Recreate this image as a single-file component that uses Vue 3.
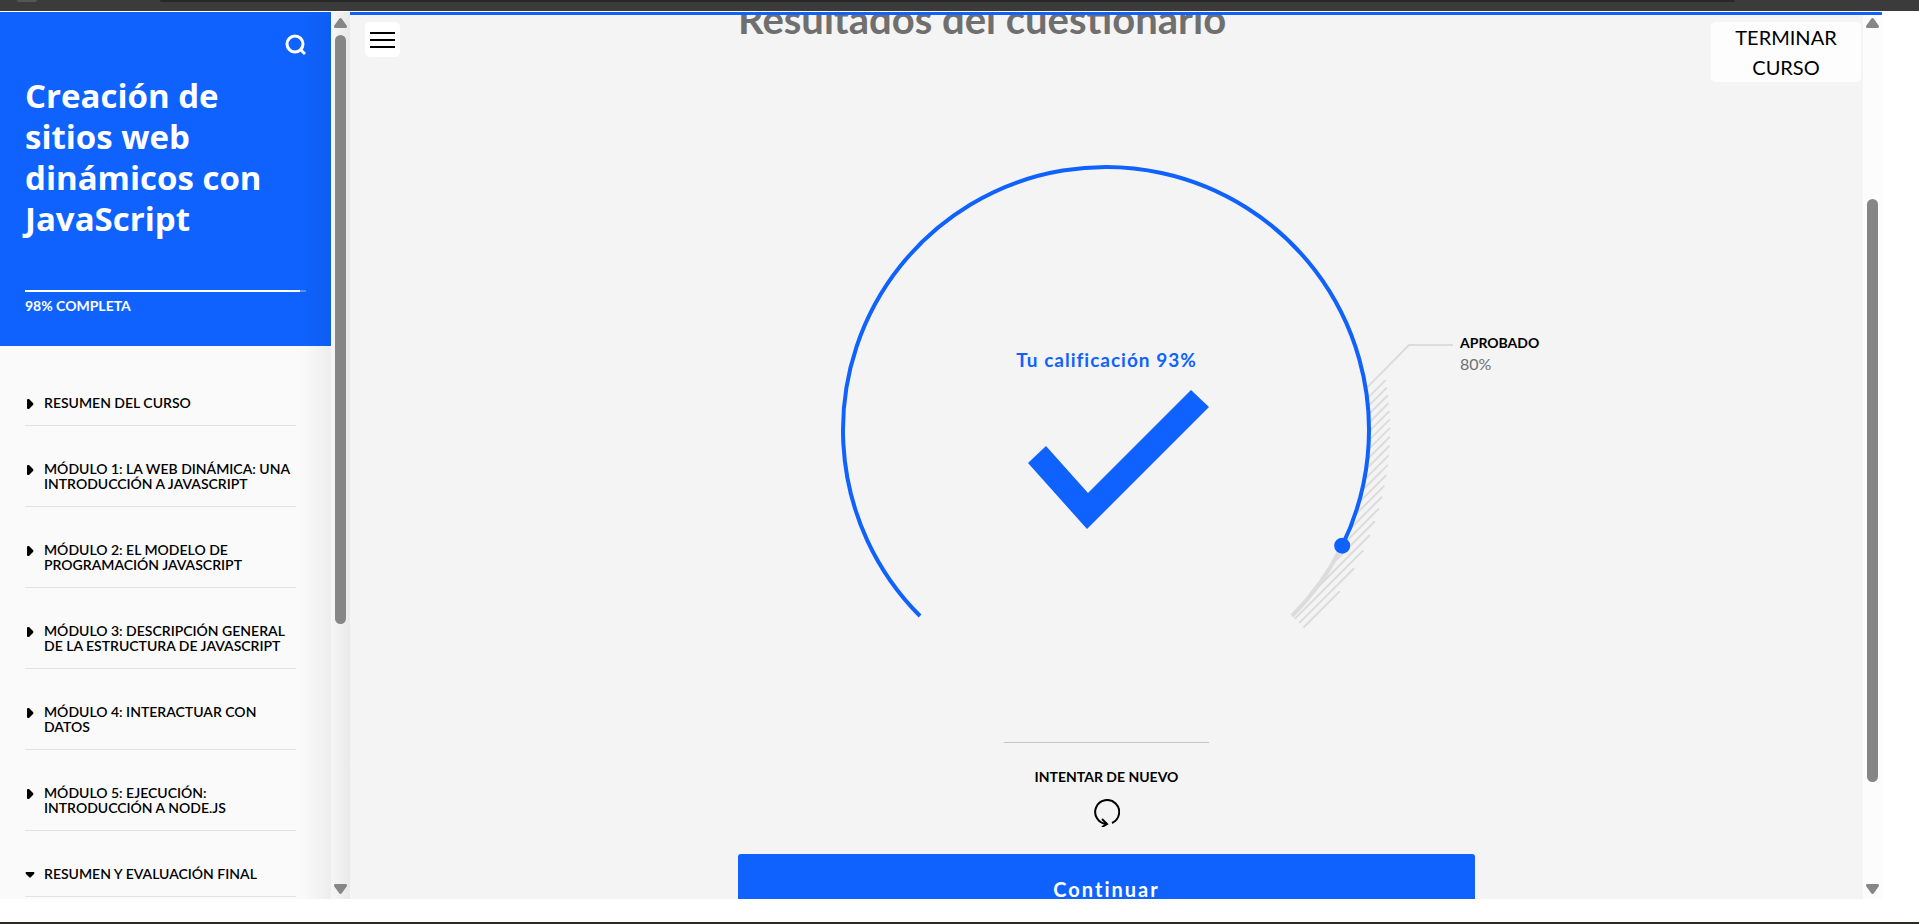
<script setup>
const modules = [
  { lines: ['RESUMEN DEL CURSO'], open: false },
  { lines: ['MÓDULO 1: LA WEB DINÁMICA: UNA', 'INTRODUCCIÓN A JAVASCRIPT'], open: false },
  { lines: ['MÓDULO 2: EL MODELO DE', 'PROGRAMACIÓN JAVASCRIPT'], open: false },
  { lines: ['MÓDULO 3: DESCRIPCIÓN GENERAL', 'DE LA ESTRUCTURA DE JAVASCRIPT'], open: false },
  { lines: ['MÓDULO 4: INTERACTUAR CON', 'DATOS'], open: false },
  { lines: ['MÓDULO 5: EJECUCIÓN:', 'INTRODUCCIÓN A NODE.JS'], open: false },
  { lines: ['RESUMEN Y EVALUACIÓN FINAL'], open: true },
]

const progress = 98

// Gauge: 270 degree arc
const cx = 368
const cy = 270
const radius = 263
const outer = 284
const point = (percent) => {
  const a = ((135 + 2.7 * percent) * Math.PI) / 180
  return { x: cx + radius * Math.cos(a), y: cy + radius * Math.sin(a) }
}
const start = point(0)
const end = point(100)
const score = point(93)
const pass = point(80)
const arcScore = `M${start.x} ${start.y}A${radius} ${radius} 0 1 1 ${score.x} ${score.y}`
const arcRest = `M${score.x} ${score.y}A${radius} ${radius} 0 0 1 ${end.x} ${end.y}`

// Diagonal hatching between the two radii, from the pass mark to the end
const hatch = Array.from({ length: 20 }, (_, i) => {
  const d = 395 - 8.7 * (19 - i) - 0
  const s = 230 + (d - 230)
  const reach = (r) => (s + Math.sqrt(Math.max(0, 2 * r * r - s * s))) / 2
  const a = reach(radius)
  const b = reach(outer)
  return { x1: cx + a, y1: cy + s - a, x2: cx + b, y2: cy + s - b }
})
</script>

<template>
  <div class="page">
    <div class="chrome"><span class="chrome-dot"></span><span class="chrome-bar"></span></div>
    <div class="course">
      <aside class="sidebar">
        <header class="cover">
          <button class="search" aria-label="Buscar">
            <svg viewBox="0 0 22 22" width="22" height="22">
              <circle cx="11" cy="10" r="8" /><path d="M16 15l5 5" />
            </svg>
          </button>
          <h1>Creación de sitios web dinámicos con JavaScript</h1>
          <div class="track"><div class="fill" :style="{ width: progress + '%' }"></div></div>
          <p class="complete">{{ progress }}% COMPLETA</p>
        </header>
        <nav class="modules">
          <button v-for="m in modules" :key="m.lines[0]" class="module" :aria-expanded="m.open">
            <svg class="caret" viewBox="0 0 10 10" width="10" height="10">
              <path v-if="m.open" d="M1 2h8q1 1 0 2L6 7Q5 8 4 7L1 4Q0 3 1 2z" />
              <path v-else d="M3 0h1l4 4q1 1 0 2L4 10H3Q2 10 2 9V1Q2 0 3 0z" />
            </svg>
            <span><span v-for="l in m.lines" :key="l" class="line">{{ l }}</span></span>
          </button>
        </nav>
      </aside>
      <div class="bar side-bar">
        <svg viewBox="0 0 13 10" width="13" height="10"><path d="M5 1Q6.500 -1 8 1l5 7q0 2-1 2H1Q0 10 0 8z" /></svg>
        <div class="rail"><div class="thumb"></div></div>
        <svg viewBox="0 0 13 10" width="13" height="10"><path d="M5 9Q6.500 11 8 9l5-7q0-2-1-2H1Q0 0 0 2z" /></svg>
      </div>
      <section class="stage">
        <div class="view">
          <main class="content">
            <div class="column">
              <h2>Resultados del cuestionario</h2>
              <div class="gauge">
                <svg class="dial" viewBox="0 0 737 540" width="737" height="540">
                  <g class="grey">
                    <line v-for="(h, i) in hatch" :key="i" v-bind="h" />
                    <path :d="`M${pass.x + 1} ${pass.y - 1}L671 185H715`" />
                    <path class="rest" :d="arcRest" />
                  </g>
                  <path class="arc" :d="arcScore" />
                  <circle class="dot" :cx="score.x" :cy="score.y" r="8" />
                </svg>
                <div class="result">
                  <p>Tu calificación 93%</p>
                  <svg viewBox="0 0 205 140" width="205" height="140">
                    <path d="M24 73l18-17 42 47L187 0l18 17L83 139z" />
                  </svg>
                </div>
                <p class="passed"><strong>APROBADO</strong><span>80%</span></p>
              </div>
              <hr />
              <button class="retry">
                <span>INTENTAR DE NUEVO</span>
                <svg viewBox="0 0 28 28" width="28" height="28">
                  <path d="M20 24A12 12 0 1 0 15 25M10 20l5 5-5 3" />
                </svg>
              </button>
              <button class="continue">Continuar</button>
            </div>
          </main>
          <button class="menu" aria-label="Menú">
            <svg viewBox="0 0 25 18" width="25" height="18"><path d="M0 2h25M0 9h25M0 16h25" /></svg>
          </button>
          <button class="finish">TERMINAR CURSO</button>
        </div>
        <div class="bar main-bar">
          <svg viewBox="0 0 13 10" width="13" height="10"><path d="M5 1Q6.500 -1 8 1l5 7q0 2-1 2H1Q0 10 0 8z" /></svg>
          <div class="rail"><div class="thumb"></div></div>
          <svg viewBox="0 0 13 10" width="13" height="10"><path d="M5 9Q6.500 11 8 9l5-7q0-2-1-2H1Q0 0 0 2z" /></svg>
        </div>
      </section>
    </div>
    <div class="floor"></div>
  </div>
</template>

<style>
body { margin: 0; overflow: hidden; }
</style>

<style scoped>
.page { height: 100vh; display: flex; flex-direction: column; background: #fff; font-family: Lato, "Open Sans", sans-serif; color: #000; }
.page * { box-sizing: border-box; }
button { font: inherit; color: inherit; border: 0; background: none; padding: 0; cursor: pointer; }
h1, h2, p, hr { margin: 0; }
svg { display: block; }
.chrome { flex: none; height: 11px; margin-bottom: 1px; background: #3b3b3b; display: flex; gap: 123px; padding: 0 184px 0 17px; overflow: hidden; }
.chrome-dot { width: 20px; height: 2px; border-radius: 0 0 10px 10px; background: #555; }
.chrome-bar { flex: 1; height: 2px; border-radius: 0 0 10px 10px; background: #272727; }
.course { flex: 1; min-height: 0; display: flex; padding-right: 37px; }
.floor { flex: none; height: 25px; border-bottom: 2px solid #2b2a24; }

.sidebar { position: relative; flex: none; width: 331px; overflow: hidden; background: #fafafa; }
.sidebar::after { content: ""; position: absolute; inset: 0 0 0 auto; width: 30px; background: linear-gradient(to right, transparent, rgba(0, 0, 0, 0.05)); pointer-events: none; }
.cover { height: 334px; padding: 22px 25px 0; background: #0f62fe; color: #fff; }
.search { display: block; margin-left: auto; }
.search svg { fill: none; stroke: #fff; stroke-width: 3; }
h1 { margin-top: 19px; font: 700 33px/41px "Open Sans", sans-serif; }
.track { height: 2px; margin-top: 51px; background: #5791ff; }
.fill { height: 100%; background: #fff; }
.complete { margin-top: 5px; font-size: 14px; line-height: 18px; font-weight: 700; }
.modules { padding: 29px 35px 0 25px; }
.module { display: flex; width: 100%; align-items: flex-start; gap: 9px; padding: 20px 0 15px; margin-bottom: 15px; border-bottom: 1px solid #e3e3e3; text-align: left; font-size: 14px; line-height: 15px; font-weight: 600; }
.caret { flex: none; margin-top: 4px; }
.line { display: block; white-space: nowrap; }

.bar { flex: none; width: 19px; display: flex; flex-direction: column; align-items: center; padding: 6px 0 5px; }
.bar svg { fill: #868686; }
.rail { flex: 1; width: 11px; margin: 7px 0; }
.thumb { border-radius: 6px; background: #868686; }
.side-bar { background: linear-gradient(to right, #f6f6f6, #e9e9e9); }
.side-bar .thumb { height: 70%; }
.main-bar { background: #fcfcfc; padding-top: 3px; }
.main-bar .rail { padding-top: 164px; }
.main-bar .thumb { height: 86%; }

.stage { flex: 1; min-width: 0; display: flex; border-top: 3px solid #0f62fe; }
.view { position: relative; flex: 1; min-width: 0; overflow: hidden; background: #f4f4f4; }
.content { display: flex; justify-content: center; }
.column { flex: none; width: 737px; display: flex; flex-direction: column; align-items: center; }
h2 { align-self: flex-start; margin-top: -20px; font-size: 40px; line-height: 48px; font-weight: 700; color: #6f6f6f; }
.gauge { position: relative; width: 737px; height: 699px; padding-top: 117px; }
.dial { fill: none; overflow: visible; }
.grey { stroke: #dcdcdc; stroke-width: 2; }
.rest { stroke-width: 4; }
.arc { stroke: #0f62fe; stroke-width: 4; }
.dot { fill: #0f62fe; }
.result { position: absolute; top: 305px; left: 0; right: 0; display: flex; flex-direction: column; align-items: center; gap: 18px; font-size: 19px; line-height: 24px; font-weight: 700; letter-spacing: 1px; color: #0f62fe; }
.result svg { fill: #0f62fe; }
.passed { position: absolute; left: 722px; top: 289px; display: flex; flex-direction: column; font-size: 14px; line-height: 21px; }
.passed span { font-size: 16px; color: #6f6f6f; }
hr { width: 205px; border: 0; border-top: 1px solid #c4c4c4; }
.retry { display: flex; flex-direction: column; align-items: center; gap: 12px; margin-top: 23px; font-size: 14px; line-height: 21px; font-weight: 700; }
.retry svg { fill: none; stroke: #000; stroke-width: 2; }
.continue { width: 100%; height: 70px; margin-top: 27px; border-radius: 3px; background: #0f62fe; color: #fff; font-size: 20px; font-weight: 700; letter-spacing: 2px; }
.menu { position: absolute; left: 15px; top: 7px; width: 35px; height: 35px; border-radius: 5px; background: #fff; display: grid; place-items: center; }
.menu svg { stroke: #000; stroke-width: 2; }
.finish { position: absolute; right: 2px; top: 7px; width: 150px; padding: 0 20px; border-radius: 5px; background: #fdfdfd; font-size: 20px; line-height: 30px; }
</style>
